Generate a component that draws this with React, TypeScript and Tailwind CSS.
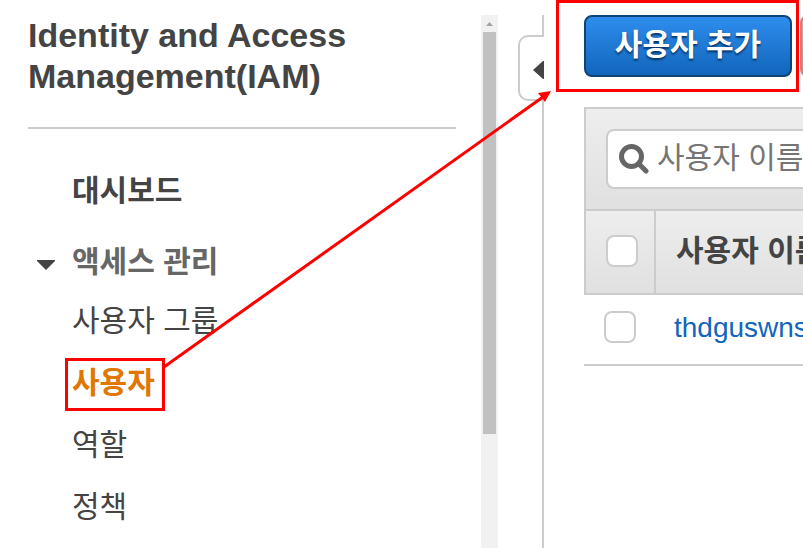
import { clsx } from "clsx";

const menuItems = [
  { label: "사용자 그룹", active: false },
  { label: "사용자", active: true },
  { label: "역할", active: false },
  { label: "정책", active: false },
];

const checkboxClass =
  "block size-8 appearance-none rounded-lg border-2 border-[#ccc] bg-white checked:bg-[#1166bb]";

function Sidebar() {
  return (
    <aside className="flex w-[498px] shrink-0">
      <div className="flex-1 pl-7 pr-[25px]">
        <h1 className="border-b-2 border-[#ccc] pb-[30px] text-[34px] leading-[41px] font-bold">
          Identity and Access Management(IAM)
        </h1>
        <nav className="pt-[30px] text-[30px]">
          <a href="#dashboard" className="flex h-[62px] items-center pl-11 font-bold">
            대시보드
          </a>
          <button
            type="button"
            aria-expanded="true"
            className="mt-3 flex h-14 w-full items-center pl-2 font-bold text-[#666]"
          >
            <svg viewBox="0 0 20 12" className="mt-2 mr-4 h-3 w-5" aria-hidden="true">
              <path d="M1 1H19V2L10 11L1 2Z" fill="#444" />
            </svg>
            액세스 관리
          </button>
          <ul>
            {menuItems.map((item) => (
              <li key={item.label}>
                <a
                  href="#users"
                  className={clsx(
                    "flex h-[62px] items-center pl-11",
                    item.active && "font-bold text-[#e07700]"
                  )}
                >
                  {item.label}
                </a>
              </li>
            ))}
          </ul>
        </nav>
      </div>
      <div className="flex w-[17px] flex-col items-center bg-[#f1f1f1]" aria-hidden="true">
        <svg viewBox="0 0 17 17" className="size-[17px]">
          <path d="M5 11H12L8.500 7Z" fill="#a3a3a3" />
        </svg>
        <div className="h-[402px] w-[13px] bg-[#c1c1c1]" />
      </div>
    </aside>
  );
}

function CollapseHandle() {
  return (
    <div className="flex w-[46px] shrink-0 flex-col">
      <div className="h-5 border-r-2 border-[#ccc]" />
      <button
        type="button"
        aria-label="메뉴 접기"
        className="ml-5 flex h-[66px] items-center justify-end rounded-l-[10px] border-2 border-r-0 border-[#ccc] pt-1"
      >
        <svg viewBox="0 0 11 18" className="h-[18px] w-[11px]">
          <path d="M11 0V18H10L0 9L10 0Z" fill="#444" />
        </svg>
      </button>
      <div className="flex-1 border-r-2 border-[#ccc]" />
    </div>
  );
}

function UserTable() {
  return (
    <div className="mt-[30px] min-w-[560px]">
      <div className="border-2 border-b-0 border-[#ccc] bg-linear-to-b from-[#eee] to-[#e0e0e0] p-5">
        <label className="flex h-[60px] items-center rounded-lg border-2 border-[#ccc] bg-white pl-[11px]">
          <svg viewBox="0 0 30 30" className="size-[30px] shrink-0" aria-hidden="true">
            <circle cx="12.500" cy="12.500" r="10" fill="none" stroke="#666" strokeWidth="5" />
            <path d="M19.500 19.500L27 27" stroke="#666" strokeWidth="5" strokeLinecap="round" />
          </svg>
          <input
            type="text"
            aria-label="사용자 검색"
            placeholder="사용자 이름"
            className="ml-2 h-full min-w-0 flex-1 pb-0.5 text-[30px] outline-none placeholder:text-[#757575]"
          />
        </label>
      </div>
      <table className="w-full border-separate border-spacing-0 text-left">
        <thead>
          <tr className="h-[86px] bg-linear-to-b from-[#eee] to-[#e0e0e0]">
            <th className="w-[72px] border-2 border-[#ccc] p-0 pb-0.5 pl-5">
              <input type="checkbox" aria-label="모두 선택" className={checkboxClass} />
            </th>
            <th className="border-y-2 border-[#ccc] p-0 pb-1 pl-5 text-[30px] font-bold">사용자 이름</th>
          </tr>
        </thead>
        <tbody>
          <tr className="h-[71px]">
            <td className="border-b-2 border-[#ccc] p-0 pb-1.5 pl-5">
              <input type="checkbox" aria-label="thdguswns 선택" className={checkboxClass} />
            </td>
            <td className="border-b-2 border-[#ccc] p-0 pb-1 pl-[18px] text-[28px]">
              <a href="#thdguswns" className="text-[#1166bb]">thdguswns</a>
            </td>
          </tr>
        </tbody>
      </table>
    </div>
  );
}

function Annotations() {
  return (
    <svg
      className="pointer-events-none absolute top-0 left-0 h-[548px] w-[803px]"
      viewBox="0 0 803 548"
      fill="none"
      stroke="#f00"
      strokeWidth="3"
      aria-hidden="true"
    >
      <rect x="66.500" y="359.500" width="97" height="50" />
      <rect x="557.500" y="1.500" width="240" height="89" />
      <path d="M164 367L543 97" />
      <path d="M551 91L545 102L538 93Z" fill="#f00" stroke="none" />
    </svg>
  );
}

export default function App() {
  return (
    <div className="relative flex min-h-screen overflow-hidden bg-white pt-[15px] font-['Liberation_Sans','Noto_Sans_CJK_KR',sans-serif] text-[#444]">
      <Sidebar />
      <CollapseHandle />
      <main className="min-w-0 flex-1 overflow-hidden pl-10">
        <div className="flex gap-2">
          <button
            type="button"
            className="h-[62px] w-52 shrink-0 rounded-lg border-2 border-[#0d4377] bg-linear-to-b from-[#2e8ded] to-[#1166bb] pb-1 text-[30px] font-bold text-white [text-shadow:0_2px_2px_#063566]"
          >
            사용자 추가
          </button>
          <button
            type="button"
            aria-label="사용자 삭제"
            className="h-[62px] w-52 shrink-0 rounded-lg border-2 border-[#cf7c7c] bg-linear-to-b from-[#eba0a0] to-[#dd8080]"
          />
        </div>
        <UserTable />
      </main>
      <Annotations />
    </div>
  );
}
